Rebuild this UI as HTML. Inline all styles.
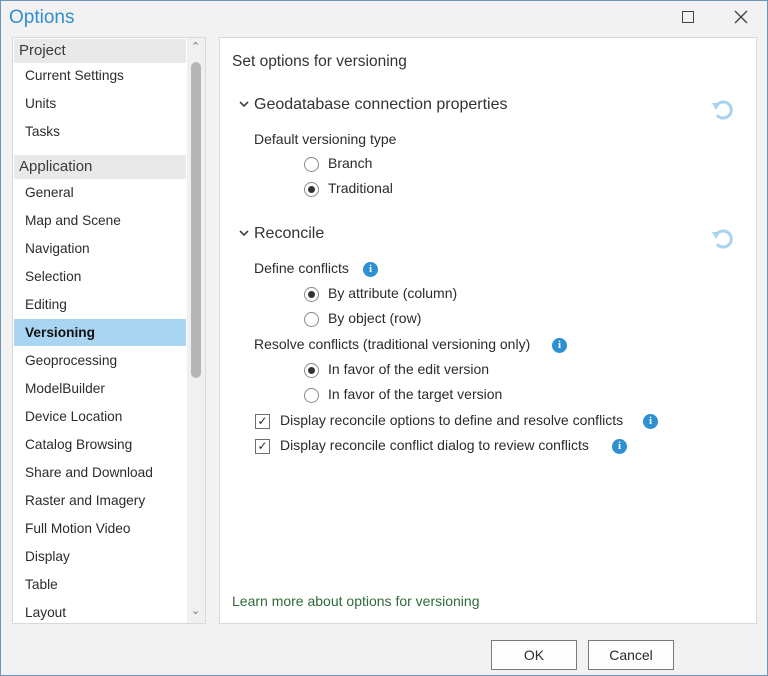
<!DOCTYPE html>
<html><head><style>
*{margin:0;padding:0;box-sizing:border-box}
body{width:768px;height:676px;background:#f2f2f2;font-family:"Liberation Sans",sans-serif;color:#2b2b2b;position:relative;overflow:hidden;border:1px solid #6d96b8}
.a{position:absolute;white-space:nowrap}
.title{left:8px;top:6px;font-size:19px;color:#2e8fd1}
.left{left:11px;top:36px;width:194px;height:587px;background:#fff;border:1px solid #d9d9d9}
.hdr{position:absolute;left:1px;width:172px;height:24px;background:#e9e9e9;font-size:15px;color:#3a3a3a;padding:3px 5px}
.it{position:absolute;left:12px;font-size:13.7px}
.sb{left:174px;top:0;width:18px;height:585px;background:#f0f0f0}
.thumb{left:178px;top:24px;width:10px;height:316px;background:#b5b5b5;border-radius:5px}
.right{left:218px;top:36px;width:538px;height:587px;background:#fff;border:1px solid #d9d9d9}
.t{font-size:14px}
.rad{position:absolute;width:15px;height:15px;border:1px solid #8a8a8a;border-radius:50%;background:#fff}
.rad.on::after{content:"";position:absolute;left:3px;top:3px;width:7px;height:7px;border-radius:50%;background:#333}
.chk{position:absolute;width:15px;height:15px;border:1px solid #6e6e6e;background:#fff;font-size:12px;line-height:13px;text-align:center}
.info{position:absolute;width:15px;height:15px;border-radius:50%;background:#2e8fd1;color:#fff;font-size:11px;font-weight:bold;text-align:center;line-height:15px;font-family:"Liberation Serif",serif}
.btn{position:absolute;top:639px;width:86px;height:30px;border:1px solid #7a7a7a;background:#fdfdfd;font-size:14px;text-align:center;line-height:28px}
</style></head><body>
<div class="a title">Options</div>
<div class="a" style="left:681px;top:10px;width:12px;height:12px;border:1.5px solid #444"></div>
<svg class="a" style="left:733px;top:9px" width="14" height="14"><path d="M1 1L13 13M13 1L1 13" stroke="#444" stroke-width="1.4"/></svg>

<div class="a left">
<div class="hdr" style="top:1px">Project</div>
<div class="it" style="top:30px">Current Settings</div>
<div class="it" style="top:58px">Units</div>
<div class="it" style="top:86px">Tasks</div>
<div class="hdr" style="top:117px">Application</div>
<div class="it" style="top:147px">General</div>
<div class="it" style="top:175px">Map and Scene</div>
<div class="it" style="top:203px">Navigation</div>
<div class="it" style="top:231px">Selection</div>
<div class="it" style="top:259px">Editing</div>
<div style="position:absolute;left:1px;top:281px;width:172px;height:27px;background:#a9d5f2"></div>
<div class="it" style="top:287px;font-weight:bold;color:#111">Versioning</div>
<div class="it" style="top:315px">Geoprocessing</div>
<div class="it" style="top:343px">ModelBuilder</div>
<div class="it" style="top:371px">Device Location</div>
<div class="it" style="top:399px">Catalog Browsing</div>
<div class="it" style="top:427px">Share and Download</div>
<div class="it" style="top:455px">Raster and Imagery</div>
<div class="it" style="top:483px">Full Motion Video</div>
<div class="it" style="top:511px">Display</div>
<div class="it" style="top:539px">Table</div>
<div class="it" style="top:567px">Layout</div>
<div class="a sb"></div>
<div class="a thumb"></div>
<div class="a" style="left:178px;top:2px;font-size:11px;color:#777">&#8963;</div>
<div class="a" style="left:178px;top:566px;font-size:11px;color:#777">&#8964;</div>
</div>

<div class="a right"></div>
<div class="a" style="left:231px;top:52px;font-size:15.5px;color:#333">Set options for versioning</div>
<svg class="a" style="left:238px;top:99px" width="10" height="8"><path d="M1 2L5 6L9 2" stroke="#444" stroke-width="1.6" fill="none"/></svg>
<div class="a" style="left:253px;top:95px;font-size:16px;color:#333">Geodatabase connection properties</div>
<svg class="a" style="left:709px;top:96px" width="26" height="24"><path d="M7 8A8 8 0 1 1 7 18" stroke="#a8d3f0" stroke-width="3" fill="none"/><path d="M2 6L10 6L6 13Z" fill="#a8d3f0"/></svg>
<div class="a t" style="left:253px;top:130px">Default versioning type</div>
<div class="rad" style="left:303px;top:156px"></div><div class="a t" style="left:327px;top:154px">Branch</div>
<div class="rad on" style="left:303px;top:181px"></div><div class="a t" style="left:327px;top:179px">Traditional</div>
<svg class="a" style="left:238px;top:228px" width="10" height="8"><path d="M1 2L5 6L9 2" stroke="#444" stroke-width="1.6" fill="none"/></svg>
<div class="a" style="left:253px;top:224px;font-size:16px;color:#333">Reconcile</div>
<svg class="a" style="left:709px;top:225px" width="26" height="24"><path d="M7 8A8 8 0 1 1 7 18" stroke="#a8d3f0" stroke-width="3" fill="none"/><path d="M2 6L10 6L6 13Z" fill="#a8d3f0"/></svg>
<div class="a t" style="left:253px;top:259px">Define conflicts</div><div class="info" style="left:362px;top:261px">i</div>
<div class="rad on" style="left:303px;top:286px"></div><div class="a t" style="left:327px;top:284px">By attribute (column)</div>
<div class="rad" style="left:303px;top:311px"></div><div class="a t" style="left:327px;top:309px">By object (row)</div>
<div class="a t" style="left:253px;top:335px">Resolve conflicts (traditional versioning only)</div><div class="info" style="left:551px;top:337px">i</div>
<div class="rad on" style="left:303px;top:362px"></div><div class="a t" style="left:327px;top:360px">In favor of the edit version</div>
<div class="rad" style="left:303px;top:387px"></div><div class="a t" style="left:327px;top:385px">In favor of the target version</div>
<div class="chk" style="left:254px;top:413px">&#10003;</div><div class="a t" style="left:279px;top:411px">Display reconcile options to define and resolve conflicts</div><div class="info" style="left:642px;top:413px">i</div>
<div class="chk" style="left:254px;top:438px">&#10003;</div><div class="a t" style="left:279px;top:436px">Display reconcile conflict dialog to review conflicts</div><div class="info" style="left:611px;top:438px">i</div>
<div class="a t" style="left:231px;top:592px;color:#2e6b3a">Learn more about options for versioning</div>
<div class="btn" style="left:490px">OK</div>
<div class="btn" style="left:587px">Cancel</div>
</body></html>
